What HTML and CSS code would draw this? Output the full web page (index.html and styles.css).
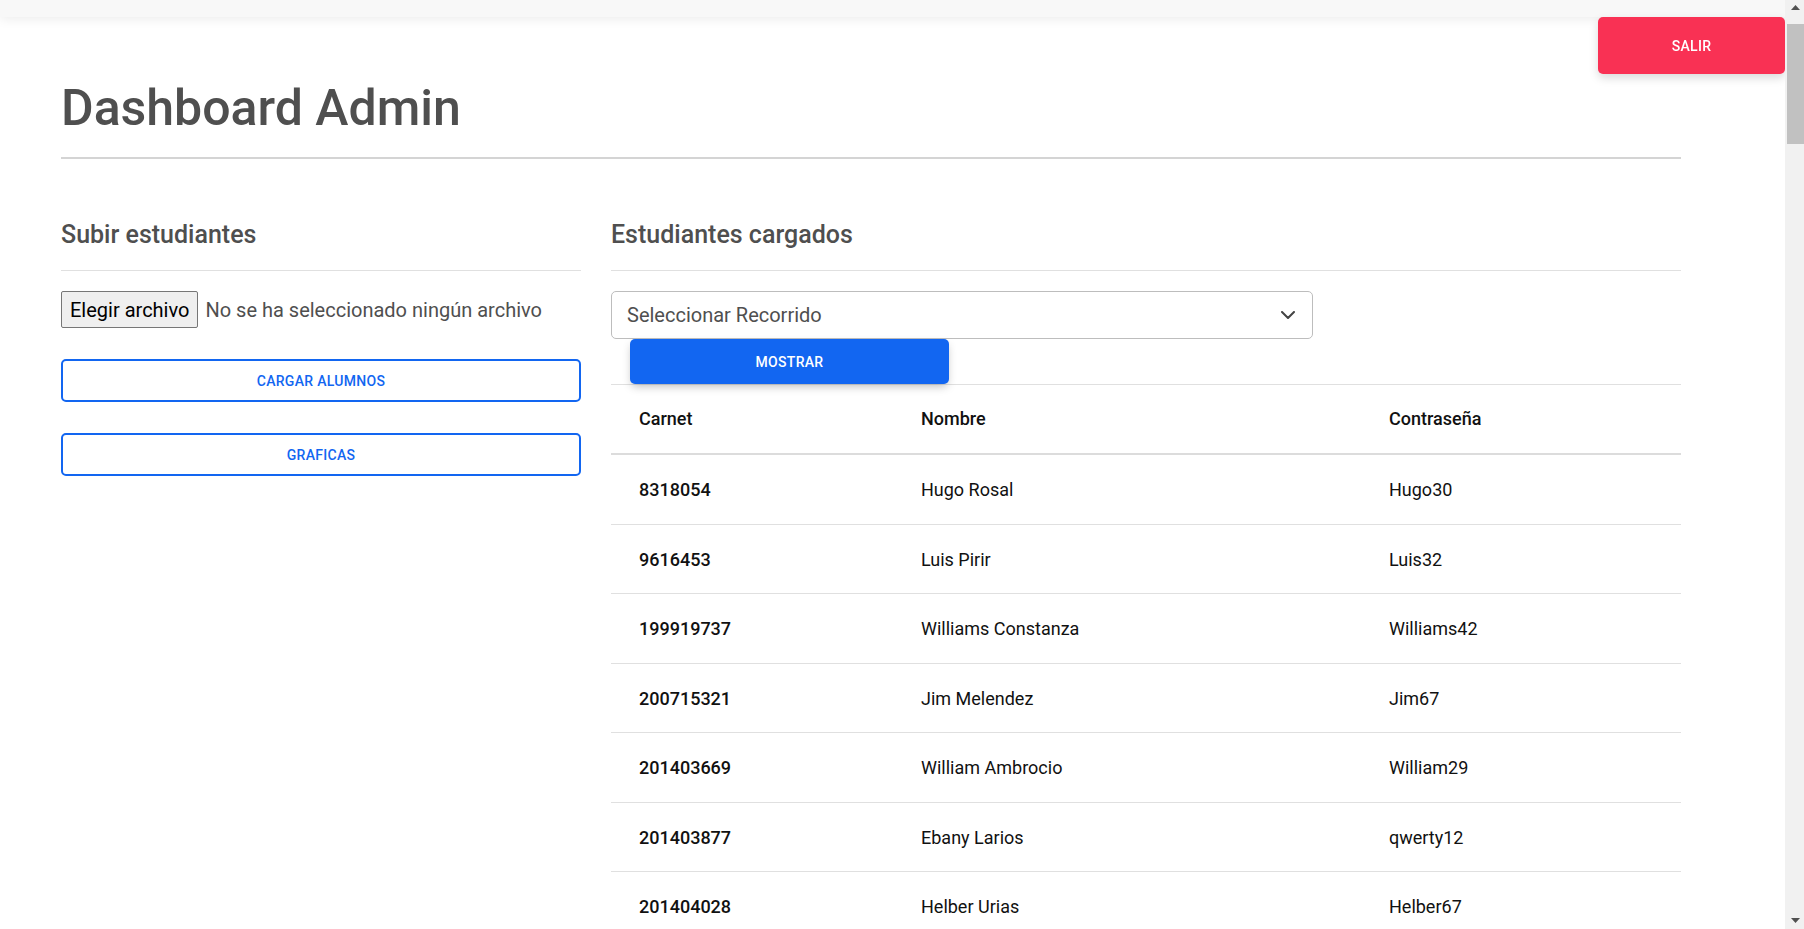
FILE: index.html
```html
<!DOCTYPE html>
<html lang="es">
<head>
<meta charset="utf-8">
<title>Dashboard Admin</title>
<link rel="stylesheet" href="styles.css">
</head>
<body>
<header class="topbar"></header>
<button class="btn-salir" type="button">SALIR</button>
<div class="scrollbar" aria-hidden="true">
  <svg class="sb-arrow" width="9" height="5" viewBox="0 0 9 5"><polygon points="0,5 4.5,0 9,5" fill="#505050"/></svg>
  <div class="sb-thumb"></div>
  <div class="sb-spacer"></div>
  <svg class="sb-arrow sb-arrow-down" width="9" height="5" viewBox="0 0 9 5"><polygon points="0,0 4.5,5 9,0" fill="#505050"/></svg>
</div>
<main class="page">
  <h1 class="title">Dashboard Admin</h1>
  <hr class="rule-main">
  <div class="columns">
    <section class="col-left">
      <h4 class="section-title">Subir estudiantes</h4>
      <hr class="rule">
      <div class="file-input">
        <span class="file-btn">Elegir archivo</span>
        <span class="file-name">No se ha seleccionado ningún archivo</span>
      </div>
      <button class="btn-outline" type="button">CARGAR ALUMNOS</button>
      <button class="btn-outline" type="button">GRAFICAS</button>
    </section>
    <section class="col-right">
      <h4 class="section-title">Estudiantes cargados</h4>
      <hr class="rule">
      <div class="select">
        <span>Seleccionar Recorrido</span>
        <svg class="chevron" width="14" height="8" viewBox="0 0 14 8"><polyline points="1,1 7,7 13,1" fill="none" stroke="#444" stroke-width="2" stroke-linecap="round" stroke-linejoin="round"/></svg>
      </div>
      <button class="btn-primary" type="button">MOSTRAR</button>
      <table class="table">
        <colgroup><col class="c1"><col class="c2"><col class="c3"></colgroup>
        <thead>
          <tr><th>Carnet</th><th>Nombre</th><th>Contraseña</th></tr>
        </thead>
        <tbody>
          <tr><td class="id">8318054</td><td>Hugo Rosal</td><td>Hugo30</td></tr>
          <tr><td class="id">9616453</td><td>Luis Pirir</td><td>Luis32</td></tr>
          <tr><td class="id">199919737</td><td>Williams Constanza</td><td>Williams42</td></tr>
          <tr><td class="id">200715321</td><td>Jim Melendez</td><td>Jim67</td></tr>
          <tr><td class="id">201403669</td><td>William Ambrocio</td><td>William29</td></tr>
          <tr><td class="id">201403877</td><td>Ebany Larios</td><td>qwerty12</td></tr>
          <tr><td class="id">201404028</td><td>Helber Urias</td><td>Helber67</td></tr>
        </tbody>
      </table>
    </section>
  </div>
</main>
</body>
</html>
```
FILE: styles.css
```css
html, body {
  margin: 0;
  padding: 0;
}

body {
  font-family: Roboto, "Liberation Sans", sans-serif;
  background: #fff;
  color: #4f4f4f;
}

.topbar {
  height: 17px;
  background: #f8f8f8;
  box-shadow: 0 2px 12px rgba(0, 0, 0, 0.08);
  position: relative;
  z-index: 1;
}

/* decorative browser scrollbar */
.scrollbar {
  position: fixed;
  top: 0;
  right: 0;
  width: 19px;
  height: 100vh;
  background: #f1f1f1;
  display: flex;
  flex-direction: column;
  align-items: flex-end;
  z-index: 20;
}

.sb-arrow {
  display: block;
  margin: 5px 4px 0 0;
  flex: none;
}

.sb-arrow-down {
  margin: 0 4px 6px 0;
}

.sb-thumb {
  width: 17px;
  height: 120px;
  margin-top: 14px;
  background: #c1c1c1;
  flex: none;
}

.sb-spacer {
  flex: 1;
}

.btn-salir {
  position: fixed;
  top: 17px;
  right: 19px;
  width: 187px;
  height: 57px;
  background: #f93154;
  color: #fff;
  border: 0;
  border-radius: 5px;
  font-family: inherit;
  font-size: 14px;
  font-weight: 500;
  letter-spacing: 0.3px;
  box-shadow: 0 4px 10px rgba(0, 0, 0, 0.15);
  z-index: 10;
  cursor: pointer;
}

.page {
  padding-left: 61px;
  width: 1620px;
  padding-bottom: 40px;
}

.title {
  margin: 61px 0 0;
  font-size: 50px;
  font-weight: 500;
  line-height: 60px;
  color: #4f4f4f;
}

.rule-main {
  margin: 19px 0 0;
  border: 0;
  height: 2px;
  background: #d4d4d4;
}

.columns {
  display: grid;
  grid-template-columns: 520px 1070px;
  column-gap: 30px;
  margin-top: 61px;
  align-items: start;
}

.section-title {
  margin: 0;
  font-size: 25px;
  font-weight: 500;
  line-height: 30px;
  color: #4f4f4f;
}

.rule {
  margin: 20px 0 0;
  border: 0;
  height: 1px;
  background: #e0e0e0;
}

.file-input {
  margin-top: 20px;
  display: flex;
  align-items: center;
  gap: 7px;
  font-size: 20px;
}

.file-btn {
  box-sizing: border-box;
  height: 37px;
  display: flex;
  align-items: center;
  padding: 0 8px;
  background: #efefef;
  border: 1px solid #767676;
  border-radius: 2px;
  color: #000;
}

.file-name {
  color: #4f4f4f;
}

.btn-outline {
  display: block;
  box-sizing: border-box;
  width: 100%;
  height: 43px;
  margin-top: 31px;
  border: 2px solid #1266f1;
  border-radius: 5px;
  background: #fff;
  color: #1266f1;
  font-family: inherit;
  font-size: 14px;
  font-weight: 500;
  letter-spacing: 0.3px;
  cursor: pointer;
}

.select {
  box-sizing: border-box;
  margin-top: 20px;
  width: 702px;
  height: 48px;
  border: 1px solid #bdbdbd;
  border-radius: 5px;
  padding: 0 17px 0 15px;
  display: flex;
  align-items: center;
  justify-content: space-between;
  font-size: 20px;
  color: #4f4f4f;
}

.chevron {
  display: block;
}

.btn-primary {
  display: block;
  margin-left: 19px;
  width: 319px;
  height: 45px;
  border: 0;
  border-radius: 5px;
  background: #1266f1;
  color: #fff;
  font-family: inherit;
  font-size: 14px;
  font-weight: 500;
  letter-spacing: 0.3px;
  box-shadow: 0 4px 10px -2px rgba(0, 0, 0, 0.28);
  position: relative;
  z-index: 1;
  cursor: pointer;
}

.table {
  width: 1070px;
  border-collapse: collapse;
  border-top: 1px solid #e0e0e0;
  color: #111;
  font-size: 18px;
  line-height: 27px;
}

.table .c1 { width: 282px; }
.table .c2 { width: 468px; }
.table .c3 { width: 320px; }

.table th,
.table td {
  text-align: left;
}

.table th {
  padding: 20px 28px 21px;
  font-weight: 500;
  border-bottom: 2px solid #dcdcdc;
}

.table td {
  padding: 21px 28px 20.5px;
  font-weight: 400;
  border-bottom: 1px solid #e0e0e0;
}

.table td.id {
  font-weight: 500;
}
```
